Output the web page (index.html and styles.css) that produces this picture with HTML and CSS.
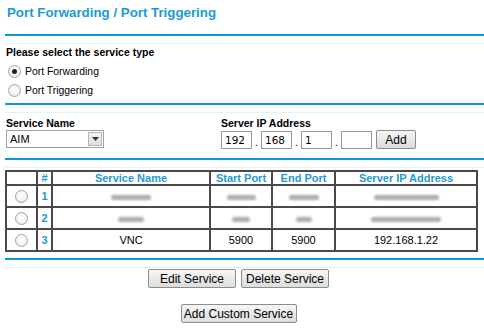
FILE: index.html
```html
<!DOCTYPE html>
<html>
<head>
<meta charset="utf-8">
<link rel="stylesheet" href="styles.css">
</head>
<body>
<h1 class="title">Port Forwarding / Port Triggering</h1>
<div class="sep sep-top"></div>

<section class="type">
  <div class="label">Please select the service type</div>
  <label class="radio-row"><span class="radio checked"></span>Port Forwarding</label>
  <label class="radio-row"><span class="radio"></span>Port Triggering</label>
</section>
<div class="sep"></div>

<section class="service">
  <div class="field name-field">
    <div class="label">Service Name</div>
    <div class="select"><span class="select-text">AIM</span><span class="select-btn"><svg width="7" height="4" viewBox="0 0 7 4"><path d="M0 0h7L3.5 4z" fill="#333"/></svg></span></div>
  </div>
  <div class="field ip-field">
    <div class="label">Server IP Address</div>
    <div class="ip-row">
      <span class="ip-box">192</span><span class="dot">.</span>
      <span class="ip-box">168</span><span class="dot">.</span>
      <span class="ip-box">1</span><span class="dot">.</span>
      <span class="ip-box"></span>
      <span class="btn add-btn">Add</span>
    </div>
  </div>
</section>
<div class="sep"></div>

<table class="grid">
  <colgroup>
    <col class="c1"><col class="c2"><col class="c3"><col class="c4"><col class="c5"><col class="c6">
  </colgroup>
  <tr class="head">
    <th></th><th>#</th><th>Service Name</th><th>Start Port</th><th>End Port</th><th>Server IP Address</th>
  </tr>
  <tr>
    <td><span class="radio"></span></td><td class="num">1</td>
    <td><span class="smear w40"></span></td>
    <td><span class="smear w29"></span></td>
    <td><span class="smear w30"></span></td>
    <td><span class="smear w65"></span></td>
  </tr>
  <tr>
    <td><span class="radio"></span></td><td class="num">2</td>
    <td><span class="smear w26"></span></td>
    <td><span class="smear w18"></span></td>
    <td><span class="smear w16"></span></td>
    <td><span class="smear w70"></span></td>
  </tr>
  <tr>
    <td><span class="radio"></span></td><td class="num">3</td>
    <td>VNC</td><td>5900</td><td>5900</td><td>192.168.1.22</td>
  </tr>
</table>
<div class="sep sep-after-table"></div>

<div class="actions">
  <div class="btn-row">
    <span class="btn wide">Edit Service</span>
    <span class="btn wide">Delete Service</span>
  </div>
  <div class="btn-row">
    <span class="btn custom">Add Custom Service</span>
  </div>
</div>
</body>
</html>
```

FILE: styles.css
```css
html, body {
  margin: 0;
  padding: 0;
  background: #fff;
}
body {
  font-family: "Liberation Sans", Arial, sans-serif;
  font-size: 11px;
  color: #000;
  width: 484px;
}
.title {
  margin: 0;
  padding: 5px 0 0 7px;
  height: 34px;
  box-sizing: border-box;
  font-size: 13.3px;
  font-weight: bold;
  color: #1a9ad6;
  line-height: 16px;
}
.sep {
  margin-left: 5px;
  height: 7px;
  border-top: 2px solid #1097d6;
  border-bottom: 1px solid #e3f1f8;
}
.label {
  font-weight: bold;
  font-size: 10.5px;
  line-height: 13px;
}
.type {
  padding: 2px 0 4px 6px;
}
.type .label {
  margin-bottom: 3px;
}
.radio-row {
  display: flex;
  align-items: center;
  height: 19px;
  padding-left: 2px;
  font-size: 10.4px;
}
.radio-row:last-child {
  height: 18px;
}
.radio-row .radio {
  margin-right: 4px;
}
.radio {
  display: inline-block;
  width: 11px;
  height: 11px;
  border: 1px solid #a4a4a4;
  border-radius: 50%;
  background: radial-gradient(circle at 50% 40%, #fff 0%, #f2f2f2 60%, #dcdcdc 100%);
  position: relative;
  vertical-align: middle;
}
.radio.checked::after {
  content: "";
  position: absolute;
  left: 3px;
  top: 3px;
  width: 5px;
  height: 5px;
  border-radius: 50%;
  background: #222;
}
.service {
  display: flex;
  padding: 4px 0 9px 6px;
}
.name-field {
  width: 215px;
}
.select {
  display: flex;
  width: 98px;
  height: 18px;
  box-sizing: border-box;
  border: 1px solid #a0a0a0;
  align-items: center;
}
.select-text {
  flex: 1;
  padding-left: 3px;
}
.select-btn {
  width: 14px;
  height: 14px;
  margin-right: 1px;
  border: 1px solid #b5b5b5;
  box-sizing: border-box;
  background: linear-gradient(#f5f5f5, #dcdcdc);
  display: flex;
  align-items: center;
  justify-content: center;
}
.ip-row {
  display: flex;
  align-items: center;
}
.ip-box {
  width: 31px;
  height: 18px;
  box-sizing: border-box;
  border: 1px solid #9a9a9a;
  padding-left: 3px;
  line-height: 16px;
  font-family: "DejaVu Sans", sans-serif;
  font-size: 10.5px;
}
.dot {
  width: 9px;
  text-align: center;
  padding-top: 4px;
}
.btn {
  display: inline-flex;
  align-items: center;
  justify-content: center;
  height: 19px;
  box-sizing: border-box;
  border: 1px solid #8c8c8c;
  border-radius: 2px;
  background: linear-gradient(#f6f6f6, #dddddd);
  font-size: 12px;
}
.add-btn {
  width: 40px;
  margin-left: 4px;
}
.grid {
  margin: 2px 0 0 5px;
  width: 471px;
  border-collapse: collapse;
  table-layout: fixed;
  border: 2px solid #4a4a4a;
}
.grid th, .grid td {
  border: 2px solid #4a4a4a;
  text-align: center;
  padding: 0;
}
.c1 { width: 31px; }
.c2 { width: 15px; }
.c3 { width: 158px; }
.c4 { width: 62px; }
.c5 { width: 63px; }
.c6 { width: 142px; }
.head th {
  height: 12px;
  line-height: 12px;
  color: #1a9ad6;
  font-weight: bold;
  font-size: 11px;
}
.grid td {
  height: 20px;
}
.num {
  color: #1a9ad6;
  font-weight: bold;
}
.smear {
  display: inline-block;
  height: 5px;
  vertical-align: middle;
  background: repeating-linear-gradient(#9a9a9a 0 1px, #c8c8c8 1px 2px);
  filter: blur(0.9px);
  border-radius: 2px;
}
.w16 { width: 16px; }
.w18 { width: 18px; }
.w26 { width: 26px; }
.w29 { width: 29px; }
.w30 { width: 30px; }
.w40 { width: 40px; }
.w65 { width: 65px; }
.w70 { width: 70px; }
.sep-after-table {
  margin-top: 6px;
}
.actions {
  padding: 1px 7px 0 0;
}
.btn-row {
  display: flex;
  justify-content: center;
  gap: 5px;
  margin-bottom: 16px;
}
.wide {
  width: 88px;
}
.custom {
  width: 116px;
}
```
